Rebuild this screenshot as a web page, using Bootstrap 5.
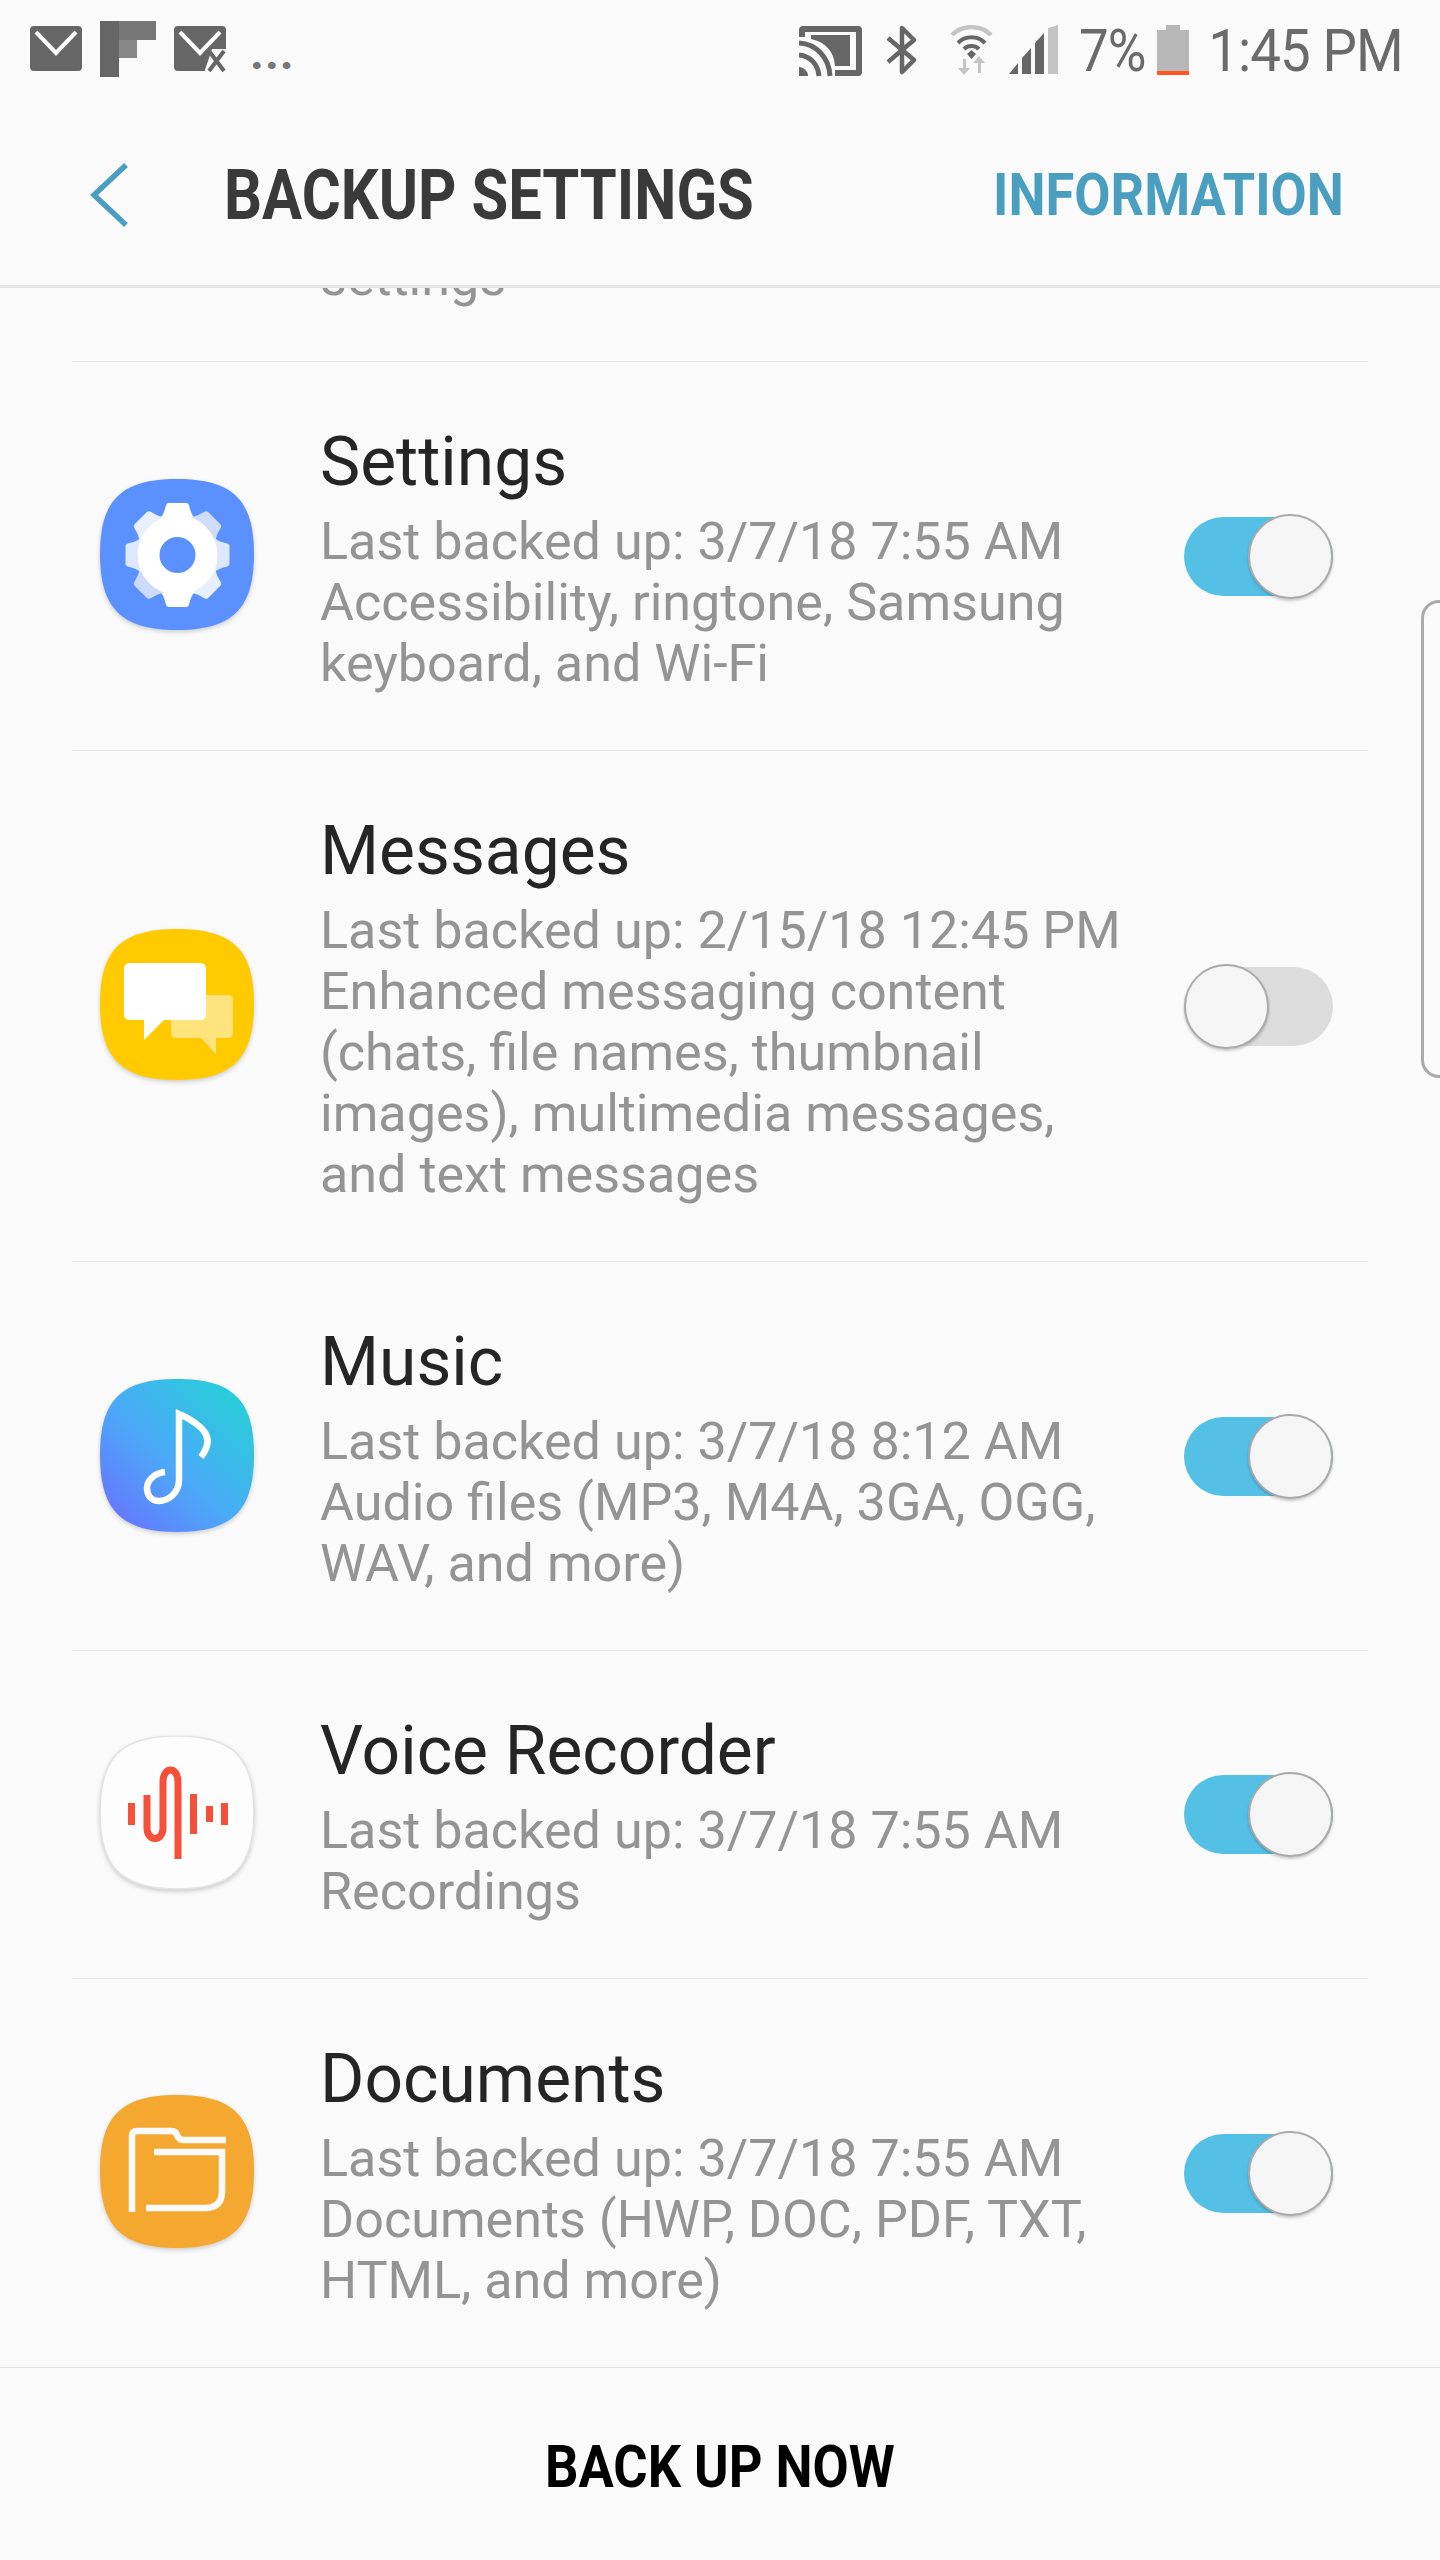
<!doctype html>
<html lang="en">
<head>
  <meta charset="utf-8">
  <meta name="viewport" content="width=device-width, initial-scale=1">
  <title>Backup settings</title>
  <link href="https://cdn.jsdelivr.net/npm/bootstrap@5.3.0/dist/css/bootstrap.min.css" rel="stylesheet">
  <style>
    html, body { height: 100%; }
    body { background: #fafafa; font-family: Roboto, "Liberation Sans", sans-serif; overflow: hidden; }
    .phone { height: 2560px; }
    .status-bar { height: 114px; padding: 21px 37px 0 30px; color: #6a6a6a; }
    .status-bar svg { display: block; }
    .status-text { font-size: 60px; font-weight: 400; line-height: 60px; letter-spacing: -1px; }
    .pct { transform: scaleX(.88); transform-origin: left center; width: 64px; white-space: nowrap; }
    .clock { transform: scaleX(.91); transform-origin: right center; white-space: nowrap; }
    .dots { font-size: 48px; font-weight: 700; line-height: 1; color: #777; letter-spacing: 1px; margin-top: 8px; }
    .app-head { height: 174px; border-bottom: 3px solid #e6e6e6; padding: 0 96px 10px 90px; }
    .head-title { font-size: 70px; font-weight: 700; color: #3a3a3a; line-height: 1; transform: scaleX(.853); transform-origin: left center; white-space: nowrap; margin-left: 95px; }
    .head-link { font-size: 60px; font-weight: 700; color: #4a9fc1; line-height: 1; transform: scaleX(.875); transform-origin: right center; white-space: nowrap; }
    .settings-list { margin: 0 72px; --bs-list-group-bg: transparent; --bs-list-group-border-color: #e6e6e6; }
    .clip-row { height: 74px; overflow: hidden; padding: 0 0 0 248px; }
    .clip-row .sub-line { margin-top: -41px; }
    .app-row { padding: 52px 35px 56px 26px; }
    .app-icon { width: 158px; height: 158px; flex: none; margin: 4px 64px 0 0; filter: drop-shadow(0 2px 2px rgba(0,0,0,.18)); }
    .app-name { font-size: 67.7px; line-height: 97px; color: #252525; }
    .sub-line { font-size: 52.1px; line-height: 61px; color: #949494; white-space: nowrap; }
    .sw-track { width: 149px; height: 79px; margin-top: 4px; border-radius: 40px; flex: none; }
    .sw-on { background: #55c0e6; }
    .sw-off { background: #dcdcdc; }
    .sw-knob { width: 85px; height: 85px; margin: -3px 0; border-radius: 50%; background: #f5f5f5; border: 2px solid #aaa; box-shadow: 0 2px 3px rgba(0,0,0,.2); }
    .bottom-btn { height: 192px; border: 0; background: transparent; width: 100%; padding-top: 6px; font-size: 60px; font-weight: 700; color: #000; }
    .bottom-btn span { display: inline-block; transform: scaleX(.875); white-space: nowrap; }
    .edge-handle { position: absolute; left: 1421px; top: 600px; width: 40px; height: 478px; border: 3px solid #aaa; border-radius: 18px; }
  </style>
</head>
<body>
  <div class="phone d-flex flex-column position-relative">

    <div class="status-bar d-flex justify-content-between align-items-start">
      <div class="d-flex align-items-start">
        <svg width="52" height="56" viewBox="0 0 52 56"><rect y="5" width="52" height="45" rx="4" fill="#666"/><path d="M6 11 L26 32 L46 11" fill="none" stroke="#fff" stroke-width="4"/></svg>
        <svg style="margin-left:18px" width="56" height="56" viewBox="0 0 56 56"><rect width="19" height="56" fill="#666"/><rect x="19" width="37" height="19" fill="#777"/><rect x="19" y="19" width="18" height="18" fill="#888"/></svg>
        <svg style="margin-left:18px" width="52" height="56" viewBox="0 0 52 56"><rect y="5" width="52" height="45" rx="4" fill="#666"/><path d="M6 11 L26 32 L46 11" fill="none" stroke="#fff" stroke-width="4"/><path d="M30 52 H52 V28 H38 Z" fill="#fafafa"/><path d="M35 30 L50 50 M50 30 L35 50" stroke="#666" stroke-width="4"/></svg>
        <span class="dots ms-4">...</span>
      </div>
      <div class="d-flex align-items-start">
        <svg width="63" height="52" viewBox="0 0 63 52" class="mt-1"><path d="M0 12 V5 Q0 1 4 1 H59 Q63 1 63 5 V47 Q63 51 59 51 H36 V45 H57 V7 H6 V12 Z" fill="#666"/><path d="M12 10 H51 V41 H36 C35 27 27 17 12 14 Z" fill="#666"/><path d="M0 18 C17 19 30 32 31 51 M0 30 C11 31 19 39 20 51" fill="none" stroke="#666" stroke-width="5"/><path d="M0 42 A9 9 0 0 1 9 51 H0 Z" fill="#666"/></svg>
        <svg width="31" height="50" viewBox="0 0 31 50" class="ms-4 mt-1"><path d="M2 13 L28 35 L16 47 V3 L28 15 L2 37" fill="none" stroke="#666" stroke-width="4.5" stroke-linejoin="round"/></svg>
        <svg width="43" height="50" viewBox="0 0 43 50" class="mt-1" style="margin-left:33px"><path d="M2 10 A28 28 0 0 1 41 10" fill="none" stroke="#c4c4c4" stroke-width="4.5"/><path d="M8 18 A19 19 0 0 1 35 18 M14 24 A11 11 0 0 1 29 24" fill="none" stroke="#666" stroke-width="4"/><path d="M17 29 L21.5 25 L26 29 L21.5 34 Z" fill="#666"/><path d="M13 34 V43 H8 L14 50 L20 43 H16 V34 Z M28 48 V38 H23 L29 31 L35 38 H31 V48 Z" fill="#c4c4c4"/></svg>
        <svg width="49" height="49" viewBox="0 0 49 49" class="mt-1" style="margin-left:16px"><path d="M0 49 L9 38 V49 Z M13 33 L22 23 V49 H13 Z M26 18 L35 8 V49 H26 Z" fill="#666"/><path d="M39 3 L49 0 V49 H39 Z" fill="#c4c4c4"/></svg>
        <span class="status-text pct" style="margin-left:21px">7%</span>
        <svg width="32" height="50" viewBox="0 0 32 50" class="mt-1" style="margin-left:14px"><path d="M9 0 H23 V5 H32 V46 H0 V5 H9 Z" fill="#b7b7b7"/><rect y="46" width="32" height="4" fill="#ff5722"/></svg>
        <span class="status-text clock">1:45 PM</span>
      </div>
    </div>

    <div class="app-head d-flex align-items-center">
      <svg width="39" height="64" viewBox="0 0 39 64" class="flex-none"><path d="M36 2 L4 32 L36 62" fill="none" stroke="#4a9fc1" stroke-width="5.5"/></svg>
      <span class="head-title">BACKUP SETTINGS</span>
      <span class="head-link ms-auto">INFORMATION</span>
    </div>

    <div class="flex-grow-1 overflow-hidden">
      <div class="list-group list-group-flush settings-list">
        <div class="list-group-item clip-row">
          <div class="sub-line">settings</div>
        </div>

        <div class="list-group-item app-row d-flex align-items-center">
          <svg class="app-icon" viewBox="27 25 158 158">
            <path d="M106 27 C162 27 183 48 183 102 C183 156 162 178 106 178 C50 178 29 156 29 102 C29 48 50 27 106 27Z" fill="#5b90ff"/>
            <g transform="translate(106.5 103)">
              <path d="M-9 -52 H9 Q11 -52 12 -48 C13 -44 14 -40 18 -36 H-18 C-14 -40 -13 -44 -12 -48 Q-11 -52 -9 -52Z" fill="#fff"/>
              <path transform="rotate(45)" d="M-9 -52 H9 Q11 -52 12 -48 C13 -44 14 -40 18 -36 H-18 C-14 -40 -13 -44 -12 -48 Q-11 -52 -9 -52Z" fill="#cfdcfb"/>
              <path transform="rotate(90)" d="M-9 -52 H9 Q11 -52 12 -48 C13 -44 14 -40 18 -36 H-18 C-14 -40 -13 -44 -12 -48 Q-11 -52 -9 -52Z" fill="#dde7fd"/>
              <path transform="rotate(135)" d="M-9 -52 H9 Q11 -52 12 -48 C13 -44 14 -40 18 -36 H-18 C-14 -40 -13 -44 -12 -48 Q-11 -52 -9 -52Z" fill="#e8effe"/>
              <path transform="rotate(180)" d="M-9 -52 H9 Q11 -52 12 -48 C13 -44 14 -40 18 -36 H-18 C-14 -40 -13 -44 -12 -48 Q-11 -52 -9 -52Z" fill="#fff"/>
              <path transform="rotate(225)" d="M-9 -52 H9 Q11 -52 12 -48 C13 -44 14 -40 18 -36 H-18 C-14 -40 -13 -44 -12 -48 Q-11 -52 -9 -52Z" fill="#cddbfb"/>
              <path transform="rotate(270)" d="M-9 -52 H9 Q11 -52 12 -48 C13 -44 14 -40 18 -36 H-18 C-14 -40 -13 -44 -12 -48 Q-11 -52 -9 -52Z" fill="#dde7fd"/>
              <path transform="rotate(315)" d="M-9 -52 H9 Q11 -52 12 -48 C13 -44 14 -40 18 -36 H-18 C-14 -40 -13 -44 -12 -48 Q-11 -52 -9 -52Z" fill="#e8effe"/>
              <circle r="40" fill="#fff"/>
              <circle r="18" fill="#5b90ff"/>
            </g>
          </svg>
          <div class="flex-grow-1">
            <div class="app-name">Settings</div>
            <div class="sub-line">Last backed up: 3/7/18 7:55 AM</div>
            <div class="sub-line">Accessibility, ringtone, Samsung</div>
            <div class="sub-line">keyboard, and Wi-Fi</div>
          </div>
          <div class="sw-track sw-on d-flex justify-content-end align-items-center"><div class="sw-knob"></div></div>
        </div>

        <div class="list-group-item app-row d-flex align-items-center">
          <svg class="app-icon" viewBox="27 26 158 158">
            <path d="M106 28 C162 28 183 49 183 103 C183 157 162 179 106 179 C50 179 29 157 29 103 C29 49 50 28 106 28Z" fill="#ffcb00"/>
            <path d="M105 94 H157 Q162 94 162 99 V132 Q162 137 157 137 H145 V153 L130 137 H105 Q100 137 100 132 V99 Q100 94 105 94Z" fill="#ffe37d"/>
            <path d="M59 62 H129 Q135 62 135 68 V113 Q135 119 129 119 H93 L73 139 V119 H59 Q53 119 53 113 V68 Q53 62 59 62Z" fill="#fff"/>
          </svg>
          <div class="flex-grow-1">
            <div class="app-name">Messages</div>
            <div class="sub-line">Last backed up: 2/15/18 12:45 PM</div>
            <div class="sub-line">Enhanced messaging content</div>
            <div class="sub-line">(chats, file names, thumbnail</div>
            <div class="sub-line">images), multimedia messages,</div>
            <div class="sub-line">and text messages</div>
          </div>
          <div class="sw-track sw-off d-flex justify-content-start align-items-center"><div class="sw-knob"></div></div>
        </div>

        <div class="list-group-item app-row d-flex align-items-center">
          <svg class="app-icon" viewBox="27 25 158 158">
            <defs>
              <linearGradient id="music-grad" x1="1" y1="0" x2="0" y2="1">
                <stop offset="0" stop-color="#20d6d2"/>
                <stop offset=".55" stop-color="#4ba9f8"/>
                <stop offset="1" stop-color="#6d6bff"/>
              </linearGradient>
            </defs>
            <path d="M106 27 C162 27 183 48 183 103 C183 158 162 180 106 180 C50 180 29 158 29 103 C29 48 50 27 106 27Z" fill="url(#music-grad)"/>
            <path d="M130 105 C140 92 138 82 128 74 C122 69 115 65 108 62 V128 C108 140 98 149 88 149 C80 149 76 143 76 136 C76 128 84 121 94 120" fill="none" stroke="#fff" stroke-width="6.5"/>
          </svg>
          <div class="flex-grow-1">
            <div class="app-name">Music</div>
            <div class="sub-line">Last backed up: 3/7/18 8:12 AM</div>
            <div class="sub-line">Audio files (MP3, M4A, 3GA, OGG,</div>
            <div class="sub-line">WAV, and more)</div>
          </div>
          <div class="sw-track sw-on d-flex justify-content-end align-items-center"><div class="sw-knob"></div></div>
        </div>

        <div class="list-group-item app-row d-flex align-items-center">
          <svg class="app-icon" viewBox="27 16 158 158">
            <path d="M106 16 C162 16 183 37 183 92 C183 147 162 169 106 169 C50 169 29 147 29 92 C29 37 50 16 106 16Z" fill="#fdfdfd" stroke="#e2e2e2" stroke-width="1.5"/>
            <g fill="#f4503a">
              <rect x="57" y="83" width="7" height="22"/>
              <rect x="119" y="74" width="7" height="40"/>
              <rect x="135" y="86" width="7" height="16"/>
              <rect x="150" y="83" width="7" height="22"/>
            </g>
            <path d="M76 75 V108 C76 122 92 122 92 108 V62 C92 46 107 46 107 62 V139" fill="none" stroke="#f4503a" stroke-width="7"/>
          </svg>
          <div class="flex-grow-1">
            <div class="app-name">Voice Recorder</div>
            <div class="sub-line">Last backed up: 3/7/18 7:55 AM</div>
            <div class="sub-line">Recordings</div>
          </div>
          <div class="sw-track sw-on d-flex justify-content-end align-items-center"><div class="sw-knob"></div></div>
        </div>

        <div class="list-group-item app-row d-flex align-items-center">
          <svg class="app-icon" viewBox="27 23 158 158">
            <path d="M106 24 C162 24 183 45 183 100 C183 155 162 177 106 177 C50 177 29 155 29 100 C29 45 50 24 106 24Z" fill="#f4a830"/>
            <path d="M61 141 V65 Q61 60 66 60 H100 Q105 60 106 64 Q108 69 112 69 H155" fill="none" stroke="#fafafa" stroke-width="6.5"/>
            <path d="M83 81 H151 V120 Q151 137 134 137 H75" fill="none" stroke="#fafafa" stroke-width="6.5"/>
          </svg>
          <div class="flex-grow-1">
            <div class="app-name">Documents</div>
            <div class="sub-line">Last backed up: 3/7/18 7:55 AM</div>
            <div class="sub-line">Documents (HWP, DOC, PDF, TXT,</div>
            <div class="sub-line">HTML, and more)</div>
          </div>
          <div class="sw-track sw-on d-flex justify-content-end align-items-center"><div class="sw-knob"></div></div>
        </div>
      </div>
    </div>

    <div class="border-top">
      <button type="button" class="bottom-btn"><span>BACK UP NOW</span></button>
    </div>

    <div class="edge-handle"></div>
  </div>

  <script src="https://cdn.jsdelivr.net/npm/bootstrap@5.3.0/dist/js/bootstrap.bundle.min.js"></script>
</body>
</html>
